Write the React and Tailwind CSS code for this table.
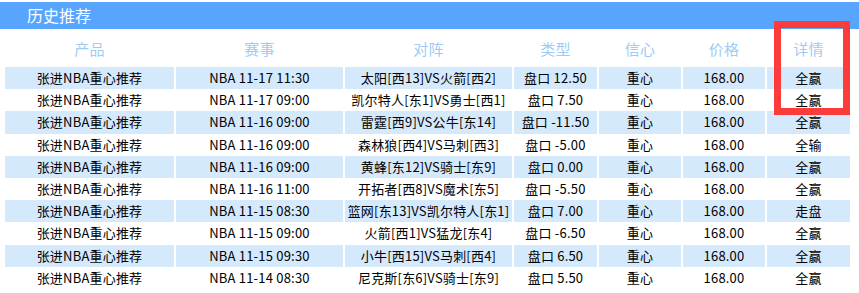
import React from "react";

const rows = [
  ["NBA 11-17 11:30", "太阳[西13]VS火箭[西2]", "盘口 12.50", "全赢"],
  ["NBA 11-17 09:00", "凯尔特人[东1]VS勇士[西1]", "盘口 7.50", "全赢"],
  ["NBA 11-16 09:00", "雷霆[西9]VS公牛[东14]", "盘口 -11.50", "全赢"],
  ["NBA 11-16 09:00", "森林狼[西4]VS马刺[西3]", "盘口 -5.00", "全输"],
  ["NBA 11-16 09:00", "黄蜂[东12]VS骑士[东9]", "盘口 0.00", "全赢"],
  ["NBA 11-16 11:00", "开拓者[西8]VS魔术[东5]", "盘口 -5.50", "全赢"],
  ["NBA 11-15 08:30", "篮网[东13]VS凯尔特人[东1]", "盘口 7.00", "走盘"],
  ["NBA 11-15 09:00", "火箭[西1]VS猛龙[东4]", "盘口 -6.50", "全赢"],
  ["NBA 11-15 09:30", "小牛[西15]VS马刺[西4]", "盘口 6.50", "全赢"],
  ["NBA 11-14 08:30", "尼克斯[东6]VS骑士[东9]", "盘口 5.50", "全赢"],
];

const heads = ["产品", "赛事", "对阵", "类型", "信心", "价格", "详情"];
const widths = ["w-[169px]", "w-[167px]", "w-[167px]", "w-[83px]", "w-[82px]", "w-[82px]", "w-[83px]"];

export default function App() {
  return (
    <div
      className="relative w-[859px] h-[293px] bg-white overflow-hidden pt-[2px]"
      style={{ fontFamily: '"Noto Sans CJK SC", sans-serif' }}
    >
      <div className="h-[27px] bg-[#57a5ff] text-white text-[16px] leading-[27px] pl-[27px]">
        历史推荐
      </div>
      <table className="ml-[3px] w-[849px] table-fixed border-separate border-spacing-x-[2px] border-spacing-y-0 text-[13px] text-black tracking-[0.2px]">
        <colgroup>
          {widths.map((w, i) => (
            <col key={i} className={w} />
          ))}
        </colgroup>
        <thead>
          <tr className="h-[38px]">
            {heads.map((h) => (
              <th key={h} className="font-normal text-[15px] text-[#9ecbf5] text-center pt-[3px] p-0">
                {h}
              </th>
            ))}
          </tr>
        </thead>
        <tbody>
          {rows.map((r, i) => {
            const bg = i % 2 === 0 ? "bg-[#d5e9fc]" : "bg-white";
            const cells = ["张进NBA重心推荐", r[0], r[1], r[2], "重心", "168.00", r[3]];
            return (
              <tr key={i} className="h-[22.2px]">
                {cells.map((c, j) => (
                  <td key={j} className={`${bg} text-center p-0 leading-[22px] whitespace-nowrap`}>
                    {c}
                  </td>
                ))}
              </tr>
            );
          })}
        </tbody>
      </table>
      <div className="absolute left-[774px] top-[21px] w-[76px] h-[94px] border-[7px] border-[#fc3b3b]" />
    </div>
  );
}
